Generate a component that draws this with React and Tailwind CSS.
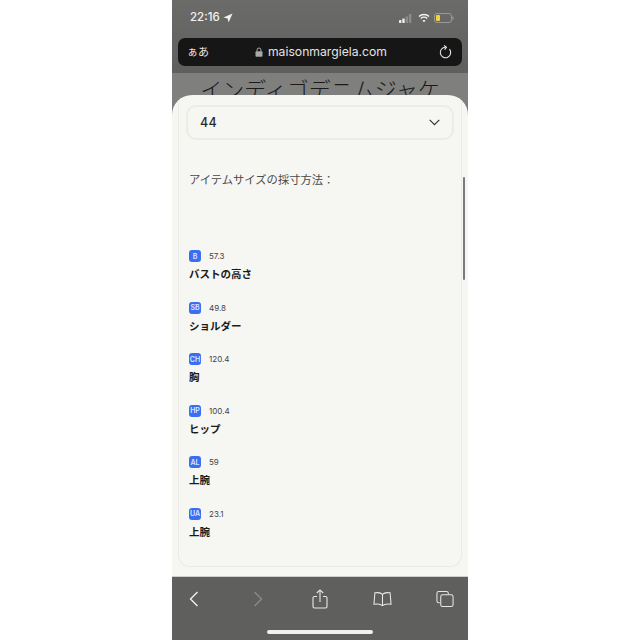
const rows = [
  ["B", "57.3", "バストの高さ"],
  ["SB", "49.8", "ショルダー"],
  ["CH", "120.4", "胸"],
  ["HP", "100.4", "ヒップ"],
  ["AL", "59", "上腕"],
  ["UA", "23.1", "上腕"],
];

function Row({ code, value, label }) {
  return (
    <div className="h-[51.6px]">
      <div className="flex items-center h-3 gap-2">
        <span className="w-3 h-3 rounded-[3px] bg-[#3b6ef0] text-[#dbe6ff] text-[7px] font-semibold flex items-center justify-center leading-none">{code}</span>
        <span className="text-[8px] text-[#444444] leading-none">{value}</span>
      </div>
      <div className="mt-[6px] h-[14px] leading-[14px] text-[10.5px] font-bold text-[#1a1a1a]">{label}</div>
    </div>
  );
}

export default function App() {
  return (
    <div className="w-[640px] h-[640px] bg-white flex justify-center font-['Inter','Noto_Sans_CJK_JP',sans-serif]">
      <div className="relative w-[296px] h-[640px] bg-[#7f7f7d] flex flex-col overflow-hidden">
        <div className="h-[73px] shrink-0 bg-gradient-to-b from-[#6b6b6a] to-[#5f5f5e]">
          <div className="h-[38px] flex items-center justify-between pl-[18px] pr-[14px] pb-[2px]">
            <div className="flex items-center gap-[3px] text-[#f2f2f2] text-[11.5px] font-medium">
              <span>22:16</span>
              <svg width="10" height="10" viewBox="0 0 10 10"><path d="M9.5.5 5.6 9.500 4.600 5.400.5 4.400z" fill="#f2f2f2" /></svg>
            </div>
            <div className="flex items-center">
              <svg width="13" height="9" viewBox="0 0 13 9">
                <rect x="0" y="6" width="2.400" height="3" rx=".5" fill="#eeeeee" />
                <rect x="3.300" y="4.500" width="2.400" height="4.500" rx=".5" fill="#eeeeee" />
                <rect x="6.600" y="2.500" width="2.400" height="6.500" rx=".5" fill="#8c8c8c" />
                <rect x="9.900" y="0" width="2.400" height="9" rx=".5" fill="#8c8c8c" />
              </svg>
              <svg className="ml-[6px]" width="12" height="10" viewBox="0 0 13 10" fill="none" stroke="#f2f2f2" strokeWidth="1.5">
                <path d="M1 3.400c3-2.900 8-2.900 11 0" />
                <path d="M3 5.500c1.900-1.700 5.100-1.700 7 0" />
                <path d="M6.500 9.600 4.900 7.700c.9-.7 2.300-.7 3.200 0z" fill="#f2f2f2" stroke="none" />
              </svg>
              <svg className="ml-[4px]" width="20" height="10" viewBox="0 0 20 10">
                <rect x=".5" y=".5" width="17" height="9" rx="2.500" fill="none" stroke="#9a9a9a" />
                <rect x="2" y="2" width="4" height="6" rx="1" fill="#f2d33c" />
                <rect x="18.400" y="3.500" width="1.200" height="3" rx=".6" fill="#9a9a9a" />
              </svg>
            </div>
          </div>
          <div className="mx-[6px] h-[28px] rounded-[7px] bg-[#161616] flex items-center justify-between pl-[9px] pr-[10px] text-[#e8e8e8]">
            <span className="text-[11px] leading-none w-[20px] whitespace-nowrap">ぁあ</span>
            <div className="flex items-center gap-[5px] -ml-[4px]">
              <svg width="8" height="10" viewBox="0 0 8 10"><path d="M2 4.500V3a2 2 0 0 1 4 0v1.500" fill="none" stroke="#a8a8a8" strokeWidth="1" /><rect x=".5" y="4.200" width="7" height="5.500" rx="1" fill="#a8a8a8" /></svg>
              <span className="text-[12.2px] leading-none text-[#e4e4e4]">maisonmargiela.com</span>
            </div>
            <svg width="13" height="14" viewBox="0 0 13 14" fill="none" stroke="#e8e8e8" strokeWidth="1.1">
              <path d="M10.500 4.200A5.200 5.200 0 1 1 6.500 2.300" />
              <path d="M5 .4 7.400 2.300 5.600 4.600" strokeLinejoin="round" />
            </svg>
          </div>
        </div>

        <div className="h-[22px] shrink-0 overflow-hidden flex justify-center pt-[5px]">
          <span className="text-[22px] leading-[24px] font-light text-[#1a1a1a] whitespace-nowrap">インディゴデニムジャケ</span>
        </div>

        <div className="flex-1 min-h-0 rounded-t-[20px] overflow-hidden bg-[#f6f6f2] px-[6px]">
          <div className="h-[472px] border-x border-b border-[#ebebe5] rounded-b-[12px] px-[7px] pt-[10px]">
            <div className="h-[35px] rounded-[10px] border-2 border-[#ecece6] flex items-center justify-between pl-[12px] pr-[12px]">
              <span className="text-[12.5px] font-medium text-[#2a2a2a] tracking-[0.4px] pt-[2px]">44</span>
              <svg width="11" height="7" viewBox="0 0 11 7" fill="none" stroke="#333333" strokeWidth="1.2"><path d="M.7.9 5.500 5.700 10.300.9" /></svg>
            </div>
            <div className="pl-[3px]">
              <p className="mt-[31px] h-[18px] leading-[18px] text-[11.3px] text-[#4a4a4a] whitespace-nowrap">アイテムサイズの採寸方法：</p>
              <div className="mt-[61px]">
                {rows.map((r) => <Row key={r.code} code={r[0]} value={r[1]} label={r[2]} />)}
              </div>
            </div>
          </div>
        </div>

        <div className="absolute left-[291px] top-[177px] w-[2px] h-[103px] rounded-full bg-[#7a7a7a]" />

        <div className="h-[64px] shrink-0 bg-[#5f5f5d] border-t border-[#cfcfca] relative">
          <div className="h-[42px] flex items-center pl-[17px] pt-[2px]">
            <svg width="10" height="16" viewBox="0 0 10 16" fill="none" stroke="#f0f0f0" strokeWidth="1.4"><path d="M8.500 1 1.500 8l7 7" /></svg>
            <svg className="ml-[54px]" width="10" height="16" viewBox="0 0 10 16" fill="none" stroke="#8a8a8a" strokeWidth="1.4"><path d="M1.500 1l7 7-7 7" /></svg>
            <svg className="ml-[49px]" width="16" height="20" viewBox="0 0 16 20" fill="none" stroke="#e8e8e8" strokeWidth="1.1"><path d="M5 7.500H2.500A1.500 1.500 0 0 0 1 9v8.500A1.500 1.500 0 0 0 2.500 19h11a1.500 1.500 0 0 0 1.500-1.500V9a1.500 1.500 0 0 0-1.500-1.500H11" /><path d="M8 13V1M4.800 4 8 .9 11.200 4" /></svg>
            <svg className="ml-[45px]" width="19" height="16" viewBox="0 0 20 16" fill="none" stroke="#e8e8e8" strokeWidth="1.1"><path d="M10 3.200C8.500 1.400 5.500 1 2 1.500L1 13.500c3.500-.6 7-.4 9 1.500 2-1.900 5.500-2.100 9-1.500l-1-12c-3.500-.5-6.500-.1-8 1.700zM10 3.200V15" /></svg>
            <svg className="ml-[44px]" width="18" height="18" viewBox="0 0 19 18" fill="none" stroke="#e8e8e8" strokeWidth="1.1"><path d="M4 13H3a2 2 0 0 1-2-2V3a2 2 0 0 1 2-2h8a2 2 0 0 1 2 2v1" /><rect x="5" y="4.500" width="13" height="12.500" rx="2" /></svg>
          </div>
          <div className="absolute left-[95px] top-[53px] w-[106px] h-[4px] rounded-full bg-[#f0f0f0]" />
        </div>
      </div>
    </div>
  );
}
